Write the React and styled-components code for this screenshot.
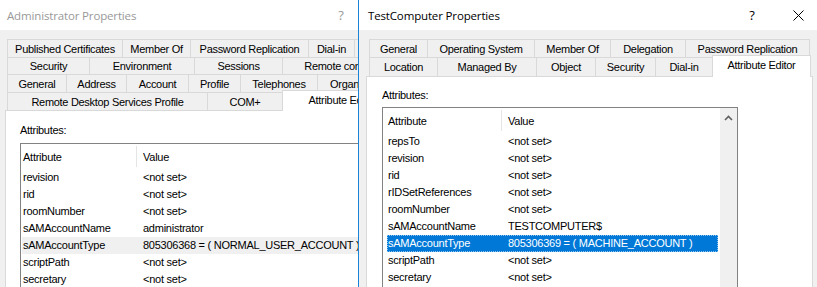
import styled, { createGlobalStyle, css } from 'styled-components';

const GlobalStyle = createGlobalStyle`
  html, body {
    margin: 0;
    padding: 0;
    background: #f0f0f0;
    overflow: hidden;
  }
  body {
    font-family: "Liberation Sans", Arial, sans-serif;
  }
`;

const Desktop = styled.div`
  position: relative;
  width: 817px;
  height: 287px;
  overflow: hidden;
  background: #f0f0f0;
`;

const Window = styled.div`
  position: absolute;
  top: 0;
  left: ${(p) => p.$left}px;
  z-index: ${(p) => (p.$active ? 2 : 1)};
  width: ${(p) => p.$width}px;
  height: 287px;
  box-sizing: border-box;
  display: flex;
  flex-direction: column;
  background: #f0f0f0;
  border-left: ${(p) => (p.$active ? '1px solid #1883d7' : 'none')};
`;

const TitleBar = styled.div`
  flex: none;
  height: 30px;
  display: flex;
  align-items: center;
  background: #fff;
  padding-left: ${(p) => p.$indent}px;
`;

const Title = styled.div`
  flex: 1;
  font-family: "Segoe UI", "Open Sans", sans-serif;
  font-size: 11.5px;
  letter-spacing: -0.15px;
  color: ${(p) => (p.$active ? '#000' : '#999')};
  white-space: nowrap;
`;

const CaptionButton = styled.div`
  flex: none;
  width: 46px;
  height: 30px;
  display: flex;
  align-items: center;
  justify-content: center;
  font-family: "Segoe UI", "Open Sans", sans-serif;
  font-size: 13px;
  color: ${(p) => (p.$active ? '#000' : '#999')};
`;

const Body = styled.div`
  flex: 1;
  display: flex;
  flex-direction: column;
  padding: 9px ${(p) => p.$right}px 0 ${(p) => p.$left}px;
  min-height: 0;
`;

const TabRow = styled.div`
  flex: none;
  display: flex;
  height: ${(p) => p.$h}px;
  margin-left: ${(p) => p.$inset}px;
`;

const Tab = styled.div`
  flex: none;
  box-sizing: border-box;
  width: ${(p) => p.$w}px;
  height: 100%;
  display: flex;
  align-items: center;
  justify-content: center;
  border-top: 1px solid #d9d9d9;
  border-right: 1px solid #d9d9d9;
  background: #f0f0f0;
  font-size: 11px;
  letter-spacing: -0.3px;
  color: #000;
  white-space: nowrap;
  overflow: hidden;

  &:first-child {
    border-left: 1px solid #d9d9d9;
  }

  ${(p) =>
    p.$selected &&
    css`
      position: relative;
      z-index: 1;
      height: calc(100% + 3px);
      margin-top: -2px;
      padding-bottom: 3px;
      border-left: 1px solid #d9d9d9;
      margin-left: -1px;
      background: #fff;
    `}
`;

const Panel = styled.div`
  flex: 1;
  display: flex;
  flex-direction: column;
  min-height: 0;
  background: #fff;
  border: 1px solid #d9d9d9;
  border-bottom: none;
  padding: ${(p) => p.$top}px 0 0 ${(p) => p.$left}px;
`;

const Label = styled.div`
  font-size: 11px;
  letter-spacing: -0.3px;
  line-height: 13px;
  color: #000;
`;

const ListBox = styled.div`
  flex: 1;
  display: flex;
  width: ${(p) => p.$width}px;
  margin-top: ${(p) => p.$gap}px;
  box-sizing: border-box;
  border: 1px solid #828282;
  border-bottom: none;
  background: #fff;
  min-height: 0;
`;

const ListContent = styled.div`
  flex: 1;
  padding: 0 2px 0 ${(p) => p.$inset}px;
  overflow: hidden;
`;

const Columns = css`
  display: grid;
  grid-template-columns: 115px 1fr;
  font-size: 11px;
  letter-spacing: -0.25px;
  white-space: nowrap;
`;

const Header = styled.div`
  ${Columns}
  height: 25px;
`;

const HeaderCell = styled.div`
  display: flex;
  align-items: center;
  padding-left: ${(p) => (p.$value ? 6 : 1)}px;
  ${(p) =>
    !p.$value &&
    css`
      margin: 2px 0;
      border-right: 1px solid #e5e5e5;
    `}
`;

const Row = styled.div`
  ${Columns}
  height: 17px;
  line-height: 17px;
  color: #000;

  ${(p) =>
    p.$state === 'hover' &&
    css`
      background: #f0f0f0;
    `}

  ${(p) =>
    p.$state === 'selected' &&
    css`
      background: #0078d7;
      color: #fff;
      outline: 1px dotted #8fc4ee;
      outline-offset: -1px;
    `}
`;

const Cell = styled.div`
  padding-left: ${(p) => (p.$value ? 6 : 1)}px;
  overflow: hidden;
`;

const Scrollbar = styled.div`
  flex: none;
  width: 17px;
  background: #f0f0f0;
  display: flex;
  flex-direction: column;
  align-items: center;
`;

const ArrowButton = styled.div`
  height: 19px;
  display: flex;
  align-items: center;
  justify-content: center;
`;

function ChevronUp() {
  return (
    <svg width="9" height="6" viewBox="0 0 9 6">
      <polyline points="1,5 4.5,1.5 8,5" fill="none" stroke="#606060" strokeWidth="1.6" />
    </svg>
  );
}

function CloseGlyph() {
  return (
    <svg width="11" height="11" viewBox="0 0 11 11">
      <path d="M0.5 0.5 L10.5 10.5 M10.5 0.5 L0.5 10.5" stroke="#000" strokeWidth="1" fill="none" />
    </svg>
  );
}

function AttributeList({ rows, width, gap, inset, scrollbar }) {
  return (
    <ListBox $width={width} $gap={gap}>
      <ListContent $inset={inset}>
        <Header>
          <HeaderCell>Attribute</HeaderCell>
          <HeaderCell $value>Value</HeaderCell>
        </Header>
        {rows.map(([name, value, state]) => (
          <Row key={name} $state={state}>
            <Cell>{name}</Cell>
            <Cell $value>{value}</Cell>
          </Row>
        ))}
      </ListContent>
      {scrollbar && (
        <Scrollbar>
          <ArrowButton>
            <ChevronUp />
          </ArrowButton>
        </Scrollbar>
      )}
    </ListBox>
  );
}

const NOT_SET = '<not set>';

// the last tab of the first row sits under the other window, its label out of sight
const adminTabs = [
  { h: 18, tabs: [['Published Certificates', 116], ['Member Of', 68], ['Password Replication', 118], ['Dial-in', 46], ['', 60]] },
  { h: 17, tabs: [['Security', 83], ['Environment', 105], ['Sessions', 88], ['Remote control', 114]] },
  { h: 18, tabs: [['General', 60], ['Address', 60], ['Account', 62], ['Profile', 52], ['Telephones', 77], ['Organization', 84]] },
  { h: 18, tabs: [['Remote Desktop Services Profile', 201], ['COM+', 75], ['Attribute Editor', 121, true]] },
];

const computerTabs = [
  { h: 18, tabs: [['General', 59], ['Operating System', 107], ['Member Of', 76], ['Delegation', 75], ['Password Replication', 124]] },
  { h: 19, tabs: [['Location', 69], ['Managed By', 99], ['Object', 59], ['Security', 60], ['Dial-in', 57], ['Attribute Editor', 99, true]] },
];

const adminRows = [
  ['revision', NOT_SET],
  ['rid', NOT_SET],
  ['roomNumber', NOT_SET],
  ['sAMAccountName', 'administrator'],
  ['sAMAccountType', '805306368 = ( NORMAL_USER_ACCOUNT )', 'hover'],
  ['scriptPath', NOT_SET],
  ['secretary', NOT_SET],
];

const computerRows = [
  ['repsTo', NOT_SET],
  ['revision', NOT_SET],
  ['rid', NOT_SET],
  ['rIDSetReferences', NOT_SET],
  ['roomNumber', NOT_SET],
  ['sAMAccountName', 'TESTCOMPUTER$'],
  ['sAMAccountType', '805306369 = ( MACHINE_ACCOUNT )', 'selected'],
  ['scriptPath', NOT_SET],
  ['secretary', NOT_SET],
];

function TabStrip({ rows, inset }) {
  return rows.map((row, i) => (
    <TabRow key={i} $h={row.h} $inset={inset}>
      {row.tabs.map(([label, w, selected], j) => (
        <Tab key={j} $w={w} $selected={selected}>
          {label}
        </Tab>
      ))}
    </TabRow>
  ));
}

export default function App() {
  return (
    <>
      <GlobalStyle />
      <Desktop>
        <Window $left={0} $width={410}>
          <TitleBar $indent={7}>
            <Title>Administrator Properties</Title>
            <CaptionButton>?</CaptionButton>
            <CaptionButton>
              <CloseGlyph />
            </CaptionButton>
          </TitleBar>
          <Body $left={5} $right={5}>
            <TabStrip rows={adminTabs} inset={2} />
            <Panel $top={13} $left={14}>
              <Label>Attributes:</Label>
              <AttributeList rows={adminRows} width={376} gap={6} inset={1} />
            </Panel>
          </Body>
        </Window>

        <Window $left={358} $width={463} $active>
          <TitleBar $indent={9}>
            <Title $active>TestComputer Properties</Title>
            <CaptionButton $active>?</CaptionButton>
            <CaptionButton $active>
              <CloseGlyph />
            </CaptionButton>
          </TitleBar>
          <Body $left={7} $right={8}>
            <TabStrip rows={computerTabs} inset={3} />
            <Panel $top={12} $left={15}>
              <Label>Attributes:</Label>
              <AttributeList rows={computerRows} width={356} gap={5} inset={4} scrollbar />
            </Panel>
          </Body>
        </Window>
      </Desktop>
    </>
  );
}
